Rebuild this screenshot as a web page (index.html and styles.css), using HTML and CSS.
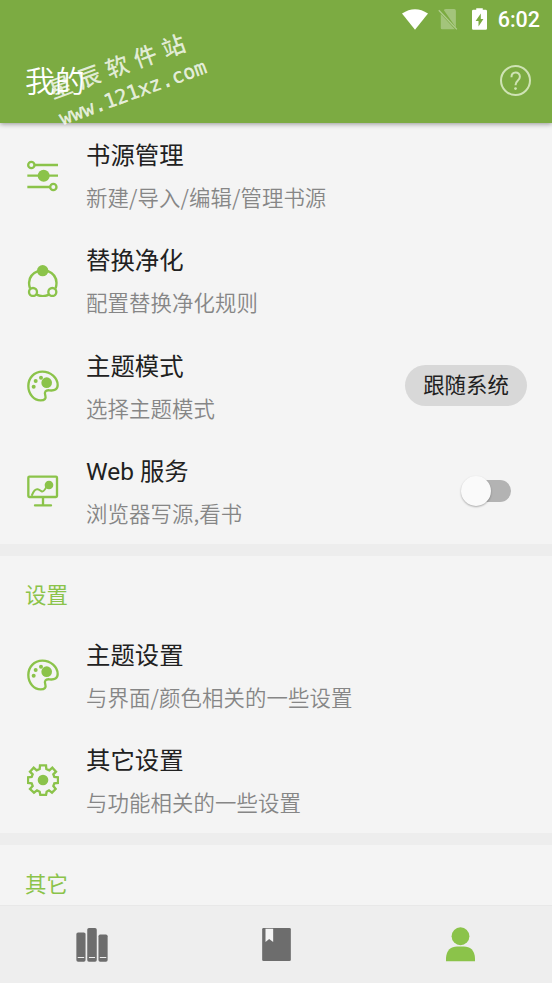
FILE: index.html
```html
<!DOCTYPE html>
<html lang="zh-CN">
<head>
<meta charset="utf-8">
<title>我的</title>
<link rel="stylesheet" href="styles.css">
</head>
<body>
<svg class="defs" aria-hidden="true">
  <symbol id="palette" viewBox="0 0 96 96">
    <path d="M46 5C21 5 4 24 4 48s17 43 37 43c12 0 17-5 14-14-4-12 1-17 12-16 16 2 25-3 25-16C92 24 71 5 46 5z" fill="none" stroke="currentColor" stroke-width="7"/>
    <circle cx="59" cy="38" r="16" fill="currentColor"/>
    <circle cx="42" cy="23" r="6" fill="currentColor"/>
    <circle cx="26" cy="33" r="6" fill="currentColor"/>
    <circle cx="20" cy="50" r="6" fill="currentColor"/>
  </symbol>
</svg>
<div class="app">
  <header class="header">
    <div class="status">
      <svg class="wifi" viewBox="0 0 78 62"><path d="M0 13Q39-13 78 13L39 62z" fill="#fff"/></svg>
      <svg class="sim" viewBox="0 0 60 64"><path d="M17 3q3-3 7-3h25q5 0 5 5v51zM8 15l43 47H12q-4 0-4-4z" fill="#fff" opacity=".3"/><path d="M2 4l55 58" stroke="#fff" stroke-width="4" opacity=".4"/></svg>
      <svg class="battery" viewBox="0 0 46 66"><path d="M13 5V0h20v5h9q4 0 4 4v53q0 4-4 4H4q-4 0-4-4V9q0-4 4-4z" fill="#fff"/><path d="M27 16L11 39h9v17l15-23h-8z" fill="#7cab42"/></svg>
      <span class="time">6:02</span>
    </div>
    <div class="toolbar">
      <h1 class="title">我的</h1>
      <svg class="help" viewBox="0 0 92 92"><circle cx="46" cy="46" r="43" fill="none" stroke="currentColor" stroke-width="6"/><path d="M34 36c0-18 25-18 25-1 0 12-13 10-13 25" fill="none" stroke="currentColor" stroke-width="6"/><circle cx="46" cy="70" r="4" fill="currentColor"/></svg>
    </div>
    <div class="watermark"><span class="wm-name">星辰软件站</span><span class="wm-url">www.121xz.com</span></div>
  </header>
  <main class="content">
    <section class="group">
      <div class="row">
        <svg class="icon" viewBox="0 0 96 96"><g fill="none" stroke="currentColor" stroke-width="7"><circle cx="13" cy="15" r="9.5"/><path d="M23 15h70M1 47h92M1 81h68"/><circle cx="79" cy="81" r="9.5"/></g><circle cx="50" cy="47" r="18" fill="currentColor"/></svg>
        <div class="text"><div class="name">书源管理</div><div class="desc">新建/导入/编辑/管理书源</div></div>
      </div>
      <div class="row">
        <svg class="icon" viewBox="0 0 96 96"><g fill="none" stroke="currentColor" stroke-width="7"><path d="M36 17Q-3 32 9 70M60 17q37 15 26 53M29 89q18 9 37 0"/><circle cx="18" cy="81" r="12"/><circle cx="76" cy="81" r="12"/></g><circle cx="47" cy="17" r="17" fill="currentColor"/></svg>
        <div class="text"><div class="name">替换净化</div><div class="desc">配置替换净化规则</div></div>
      </div>
      <div class="row">
        <svg class="icon"><use href="#palette"/></svg>
        <div class="text"><div class="name">主题模式</div><div class="desc">选择主题模式</div></div>
        <button class="pill">跟随系统</button>
      </div>
      <div class="row">
        <svg class="icon" viewBox="0 0 96 96"><g fill="none" stroke="currentColor" stroke-width="7" stroke-linecap="round" stroke-linejoin="round"><rect x="4" y="5" width="86" height="61" rx="3"/><path d="M48 67v23M24 91h48"/><path d="M15 60q8-19 17-17 4 1 12 6 6 3 15-15" stroke-width="6"/></g><circle cx="66" cy="30" r="13" fill="currentColor"/></svg>
        <div class="text"><div class="name">Web 服务</div><div class="desc">浏览器写源,看书</div></div>
        <span class="switch"><span class="thumb"></span></span>
      </div>
    </section>
    <section class="group">
      <h2 class="label">设置</h2>
      <div class="row">
        <svg class="icon"><use href="#palette"/></svg>
        <div class="text"><div class="name">主题设置</div><div class="desc">与界面/颜色相关的一些设置</div></div>
      </div>
      <div class="row">
        <svg class="icon" viewBox="-48 -48 96 96"><path fill="none" stroke="currentColor" stroke-width="7" stroke-linejoin="miter" d="M-9-44H9L10-33L19-29L28-37L39-25L31-17L34-9L45-8V9L34 10L31 18L38 27L27 38L18 31L11 35L9 45H-8L-10 35L-18 31L-27 38L-39 27L-31 18L-34 10L-45 9V-8L-34-9L-31-17L-39-25L-28-37L-19-29L-10-33Z"/><circle r="16" fill="currentColor"/></svg>
        <div class="text"><div class="name">其它设置</div><div class="desc">与功能相关的一些设置</div></div>
      </div>
    </section>
    <section class="group">
      <h2 class="label">其它</h2>
    </section>
  </main>
  <nav class="nav">
    <a class="tab"><svg class="books" viewBox="0 0 94 100"><g fill="currentColor"><rect x="1" y="13" width="27" height="86" rx="5"/><rect x="33" y="0" width="28" height="99" rx="5"/><rect x="66" y="19" width="27" height="80" rx="5"/></g><path d="M5 87h19M38 87h18M70 87h19" stroke="#eee" stroke-width="3"/></svg></a>
    <a class="tab"><svg class="book" viewBox="0 0 86 99"><rect width="86" height="99" rx="4" fill="currentColor"/><path d="M10 2h23v40l-12-9-11 9z" fill="#f4f4f4"/></svg></a>
    <a class="tab active"><svg class="person" viewBox="0 0 88 104"><circle cx="44" cy="27" r="27" fill="currentColor"/><path d="M0 103V94C1 69 15 58 34 58h20c19 0 33 11 34 36v9z" fill="currentColor"/></svg></a>
  </nav>
</div>
</body>
</html>
```

FILE: styles.css
```css
* { box-sizing: border-box; }
body {
  margin: 0;
  font-family: Roboto, "Noto Sans CJK SC", sans-serif;
  background: #f4f4f4;
}
.defs { position: absolute; width: 0; height: 0; }
.app {
  width: 552px;
  height: 983px;
  display: flex;
  flex-direction: column;
  overflow: hidden;
}
.header {
  position: relative;
  z-index: 1;
  flex: none;
  height: 123px;
  background: #7cab42;
  box-shadow: 0 1px 5px rgba(0, 0, 0, .4);
  color: #fff;
}
.status {
  height: 38px;
  padding-right: 12px;
  display: flex;
  justify-content: flex-end;
  align-items: center;
}
.wifi { width: 26px; height: 21px; margin-right: 10px; }
.sim { width: 20px; height: 21px; margin-right: 14px; }
.battery { width: 15px; height: 22px; margin-right: 11px; }
.time { font-size: 21.5px; font-weight: 500; line-height: 38px; padding-top: 1px; }
.toolbar {
  height: 85px;
  padding: 0 21px 0 25px;
  display: flex;
  align-items: center;
  justify-content: space-between;
}
.title { margin: 0; padding-top: 2px; font-size: 30px; font-weight: 350; line-height: 40px; }
.help { width: 31px; height: 31px; color: #cfe3b4; }
.watermark {
  position: absolute;
  left: 51px;
  top: 51px;
  display: flex;
  flex-direction: column;
  transform: rotate(-20deg);
  color: rgba(255, 255, 255, .78);
  white-space: nowrap;
}
.wm-name { font-size: 23px; font-weight: 500; line-height: 27px; letter-spacing: 7px; }
.wm-url { font-family: "DejaVu Sans Mono", monospace; font-size: 19.8px; line-height: 32px; -webkit-text-stroke: .4px; }
.content { flex: 1; overflow: hidden; }
.group + .group { border-top: 12px solid #ededed; }
.row {
  height: 105.25px;
  padding: 0 25px 0 27px;
  display: flex;
  align-items: center;
}
.icon { width: 32px; height: 32px; margin-right: 27px; color: #8bc34a; flex: none; }
.text { flex: 1; padding-top: 1px; }
.name { font-size: 24.4px; line-height: 42px; color: #212121; }
.desc {
  font-family: "Noto Sans CJK SC", sans-serif;
  font-size: 21.4px;
  line-height: 40px;
  letter-spacing: .1px;
  color: #868686;
  font-weight: 350;
}
.pill {
  width: 122px;
  height: 41px;
  margin-top: -1px;
  padding: 1px 0 0;
  border: 0;
  border-radius: 21px;
  background: #d8d8d8;
  color: #212121;
  font: 21.4px/40px Roboto, "Noto Sans CJK SC", sans-serif;
}
.switch {
  width: 46px;
  height: 22px;
  margin-right: 16px;
  display: flex;
  align-items: center;
  border-radius: 11px;
  background: #b3b3b3;
}
.thumb {
  width: 30px;
  height: 30px;
  margin-left: -4px;
  flex: none;
  border-radius: 50%;
  background: #fafafa;
  box-shadow: 0 1px 2px rgba(0, 0, 0, .3);
}
.label {
  height: 66.5px;
  margin: 0;
  padding: 19px 25px 0;
  font-size: 21.4px;
  line-height: 42px;
  font-weight: 400;
  color: #8bc34a;
}
.nav {
  flex: none;
  height: 78px;
  display: flex;
  background: #eee;
  border-top: 1px solid #e8e8e8;
  color: #6d6d6d;
}
.tab { flex: 1; display: flex; align-items: center; justify-content: center; }
.active { color: #8bc34a; }
.books { width: 32px; height: 34px; }
.book { width: 29px; height: 33px; }
.person { width: 29px; height: 35px; }
```
